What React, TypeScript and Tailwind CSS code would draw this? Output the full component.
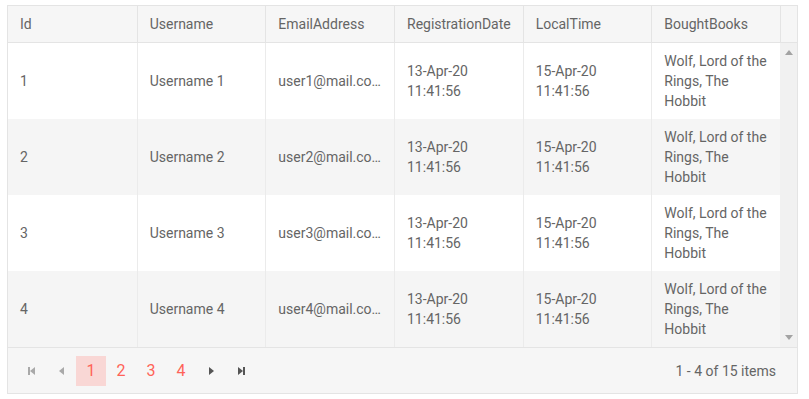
import React from "react";

const cols = ["Id", "Username", "EmailAddress", "RegistrationDate", "LocalTime", "BoughtBooks"];

const rows = [1, 2, 3, 4].map((n) => ({
  id: n,
  name: `Username ${n}`,
  email: `user${n}@mail.com`,
  reg: "13-Apr-20 11:41:56",
  local: "15-Apr-20 11:41:56",
  books: "Wolf, Lord of the Rings, The Hobbit",
}));

const Tri = ({ dir }: { dir: "up" | "down" | "left" | "right" }) => {
  const pts = {
    up: "0,5 4,0 8,5",
    down: "0,0 4,5 8,0",
    left: "5,0 5,8 0,4",
    right: "0,0 0,8 5,4",
  }[dir];
  const w = dir === "up" || dir === "down" ? 8 : 5;
  const h = dir === "up" || dir === "down" ? 5 : 8;
  return (
    <svg width={w} height={h} viewBox={`0 0 ${w} ${h}`}>
      <polygon points={pts} fill="currentColor" />
    </svg>
  );
};

const PagerBtn = ({ children, className = "" }: { children: React.ReactNode; className?: string }) => (
  <div className={`w-[30px] h-[30px] flex items-center justify-center ${className}`}>{children}</div>
);

export default function App() {
  return (
    <div className="pl-[7px] pt-[5px] bg-white" style={{ fontFamily: "Roboto, 'Liberation Sans', sans-serif" }}>
      <div className="w-[791px] border border-[#e4e4e4] text-[14px] leading-[20px] text-[#656565]">
        {/* header */}
        <div className="flex bg-[#f6f6f6] border-b border-[#e4e4e4]">
          <div className="grid grid-cols-6 w-[772px]">
            {cols.map((c, i) => (
              <div key={c} className={`pl-3 py-2 h-[36px] whitespace-nowrap overflow-hidden ${i > 0 ? "border-l border-[#e4e4e4]" : ""}`}>
                {c}
              </div>
            ))}
          </div>
          <div className="w-[17px] border-l border-[#e4e4e4]" />
        </div>
        {/* body */}
        <div className="flex">
          <div className="w-[772px]">
            {rows.map((r, idx) => (
              <div key={r.id} className={`grid grid-cols-6 h-[76px] ${idx % 2 ? "bg-[#f5f5f5]" : "bg-white"}`}>
                <div className="px-3 py-2 flex items-center">{r.id}</div>
                <div className="px-3 py-2 flex items-center border-l border-[#ebebeb]">{r.name}</div>
                <div className="px-3 py-2 flex items-center border-l border-[#ebebeb] min-w-0">
                  <span className="truncate">{r.email}</span>
                </div>
                <div className="px-3 py-2 flex items-center border-l border-[#ebebeb]">
                  <span className="w-[84px]">{r.reg}</span>
                </div>
                <div className="px-3 py-2 flex items-center border-l border-[#ebebeb]">
                  <span className="w-[84px]">{r.local}</span>
                </div>
                <div className="px-3 py-2 flex items-center border-l border-[#ebebeb]">{r.books}</div>
              </div>
            ))}
          </div>
          <div className="w-[17px] bg-[#f1f1f1] flex flex-col justify-between items-center py-[7px] text-[#a3a3a3]">
            <Tri dir="up" />
            <Tri dir="down" />
          </div>
        </div>
        {/* pager */}
        <div className="flex items-center justify-between bg-[#f6f6f6] border-t border-[#e4e4e4] px-2 py-2 h-[46px]">
          <div className="flex items-center">
            <PagerBtn className="text-[#a9a9a9]">
              <span className="flex items-center">
                <span className="w-[2px] h-[8px] bg-current" />
                <Tri dir="left" />
              </span>
            </PagerBtn>
            <PagerBtn className="text-[#a9a9a9]">
              <Tri dir="left" />
            </PagerBtn>
            <PagerBtn className="bg-[#f9d7d5] text-[#ff6358] text-[16px]">1</PagerBtn>
            <PagerBtn className="text-[#ff6358] text-[16px]">2</PagerBtn>
            <PagerBtn className="text-[#ff6358] text-[16px]">3</PagerBtn>
            <PagerBtn className="text-[#ff6358] text-[16px]">4</PagerBtn>
            <PagerBtn className="text-[#555]">
              <Tri dir="right" />
            </PagerBtn>
            <PagerBtn className="text-[#555]">
              <span className="flex items-center">
                <Tri dir="right" />
                <span className="w-[2px] h-[8px] bg-current" />
              </span>
            </PagerBtn>
          </div>
          <div className="pr-[13px]">1 - 4 of 15 items</div>
        </div>
      </div>
    </div>
  );
}
